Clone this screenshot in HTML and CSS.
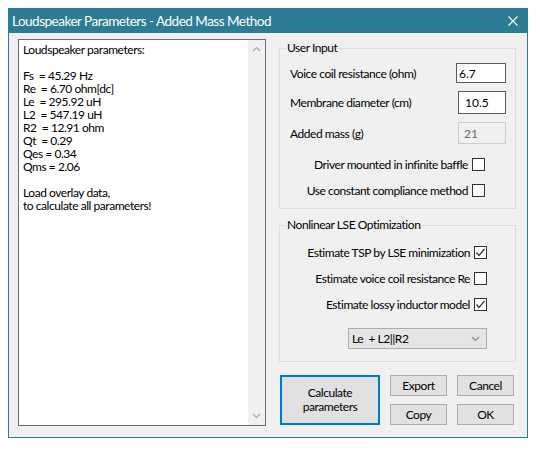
FILE: index.html
```html
<!DOCTYPE html>
<html lang="en">
<head>
    <meta charset="UTF-8">
    <meta name="viewport" content="width=device-width, initial-scale=1.0">
    <title>Loudspeaker Parameters - Added Mass Method</title>
    <link rel="stylesheet" href="styles.css">
</head>
<body>
    <div class="window">
        <div class="titlebar">
            <span class="title">Loudspeaker Parameters - Added Mass Method</span>
            <svg class="close" width="10" height="10" viewBox="0 0 10 10">
                <path d="M0.5 0.5 L9.5 9.5 M9.5 0.5 L0.5 9.5" stroke="#fff" stroke-width="1.1" fill="none"/>
            </svg>
        </div>
        <div class="client">
            <div class="results">
                <pre class="results-text">Loudspeaker parameters:

Fs  = 45.29 Hz
Re  = 6.70 ohm[dc]
Le  = 295.92 uH
L2  = 547.19 uH
R2  = 12.91 ohm
Qt  = 0.29
Qes = 0.34
Qms = 2.06

Load overlay data,
to calculate all parameters!</pre>
                <div class="scrollbar">
                    <svg width="17" height="17" viewBox="0 0 17 17">
                        <path d="M5 10 L8.5 6.5 L12 10" stroke="#a6a6a6" stroke-width="1.2" fill="none"/>
                    </svg>
                    <svg width="17" height="17" viewBox="0 0 17 17">
                        <path d="M5 7 L8.5 10.5 L12 7" stroke="#a6a6a6" stroke-width="1.2" fill="none"/>
                    </svg>
                </div>
            </div>

            <div class="controls">
                <fieldset class="group group-input">
                    <legend>User Input</legend>
                    <div class="field field-re">
                        <label for="re">Voice coil resistance (ohm)</label>
                        <input type="text" id="re" value="6.7">
                    </div>
                    <div class="field field-diam">
                        <label for="diam">Membrane diameter (cm)</label>
                        <input type="text" id="diam" value="10.5">
                    </div>
                    <div class="field field-mass">
                        <label for="mass">Added mass (g)</label>
                        <input type="text" id="mass" value="21" disabled>
                    </div>
                    <div class="check check-first">
                        <span>Driver mounted in infinite baffle</span>
                        <span class="box"></span>
                    </div>
                    <div class="check">
                        <span>Use constant compliance method</span>
                        <span class="box"></span>
                    </div>
                </fieldset>

                <fieldset class="group group-lse">
                    <legend>Nonlinear LSE Optimization</legend>
                    <div class="check check-first">
                        <span>Estimate TSP by LSE minimization</span>
                        <span class="box checked">
                            <svg width="11" height="11" viewBox="0 0 11 11"><path d="M1.5 5.5 L4 8.5 L9.5 2" stroke="#333" stroke-width="1.2" fill="none"/></svg>
                        </span>
                    </div>
                    <div class="check">
                        <span>Estimate voice coil resistance Re</span>
                        <span class="box"></span>
                    </div>
                    <div class="check">
                        <span>Estimate lossy inductor model</span>
                        <span class="box checked">
                            <svg width="11" height="11" viewBox="0 0 11 11"><path d="M1.5 5.5 L4 8.5 L9.5 2" stroke="#333" stroke-width="1.2" fill="none"/></svg>
                        </span>
                    </div>
                    <div class="combo">
                        <span class="combo-value">Le  + L2||R2</span>
                        <svg width="9" height="6" viewBox="0 0 9 6"><path d="M1 1 L4.5 4.5 L8 1" stroke="#8a8a8a" stroke-width="1.1" fill="none"/></svg>
                    </div>
                </fieldset>

                <div class="buttons">
                    <button type="button" class="btn btn-calc">Calculate<br>parameters</button>
                    <button type="button" class="btn">Export</button>
                    <button type="button" class="btn">Cancel</button>
                    <button type="button" class="btn">Copy</button>
                    <button type="button" class="btn">OK</button>
                </div>
            </div>
        </div>
    </div>
</body>
</html>
```

FILE: styles.css
```css
*{
    margin: 0;
    padding: 0;
    box-sizing: border-box;
}
body{
    margin: 8px;
    background-color: #fff;
    font-family: Lato, "Liberation Sans", sans-serif;
    font-size: 12px;
    letter-spacing: -0.45px;
    color: #000;
}

.window{
    width: 520px;
    height: 430px;
    border: 1px solid #2c7c96;
    border-top: none;
    background-color: #f0f0f0;
    display: flex;
    flex-direction: column;
}
.titlebar{
    height: 25px;
    flex-shrink: 0;
    background-color: #2c7c96;
    color: #fff;
    display: flex;
    align-items: center;
    justify-content: space-between;
    padding: 0 9px 0 3px;
}
.title{
    font-size: 13.5px;
    letter-spacing: -0.5px;
}

.client{
    flex: 1;
    display: flex;
    padding: 6px 0 0 9px;
}

/* read-only results box with its scrollbar */
.results{
    width: 248px;
    height: 387px;
    border: 1px solid #6d6d6d;
    background-color: #fff;
    display: flex;
}
.results-text{
    flex: 1;
    padding: 3px 4px;
    font: inherit;
    line-height: 13px;
}
.scrollbar{
    width: 17px;
    background-color: #f0f0f0;
    display: flex;
    flex-direction: column;
    justify-content: space-between;
    padding: 1px 0 1px;
}

.controls{
    width: 237px;
    margin-left: 13px;
    padding-top: 2px;
    display: flex;
    flex-direction: column;
}
.group{
    border: 1px solid #dcdcdc;
    padding: 0 0 11px;
    display: flex;
    flex-direction: column;
}
.group legend{
    margin-left: 6px;
    padding: 0 1px;
    line-height: 14px;
}
.group-lse{
    margin-top: 9px;
    padding-bottom: 12px;
}

.field{
    display: flex;
    align-items: center;
    justify-content: space-between;
    padding: 0 9px 0 10px;
    margin-top: 8px;
}
.field input{
    font: inherit;
    color: #000;
    background-color: #fff;
    border: 1px solid #5a5a5a;
    outline: none;
    width: 48px;
    height: 23px;
    padding-left: 6px;
}
.field-re input{
    width: 50px;
    height: 20px;
    padding-left: 2px;
}
.field-mass input{
    height: 22px;
    padding-left: 5px;
    border-color: #cccccc;
    background-color: #f0f0f0;
    color: #6d6d6d;
}

.check{
    height: 14px;
    margin-top: 12px;
    display: flex;
    align-items: center;
    justify-content: flex-end;
    gap: 4px;
    padding-right: 30px;
}
.check-first{
    margin-top: 13px;
}
.group-lse .check{
    padding-right: 28px;
}
.box{
    width: 13px;
    height: 13px;
    border: 1px solid #333;
    background-color: #fff;
    display: flex;
    align-items: center;
    justify-content: center;
}

.combo{
    width: 139px;
    height: 21px;
    margin: 17px 0 0 68px;
    background-color: #e5e5e5;
    border: 1px solid #adadad;
    display: flex;
    align-items: center;
    justify-content: space-between;
    padding: 0 6px 0 3px;
}
.combo-value{
    white-space: pre;
}

.buttons{
    margin: 13px 0 0 1px;
    display: grid;
    grid-template-columns: 100px 57px 57px;
    grid-template-rows: 21px 21px;
    column-gap: 10px;
    row-gap: 8px;
}
.btn{
    font: inherit;
    letter-spacing: inherit;
    color: #000;
    background-color: #e1e1e1;
    border: 1px solid #adadad;
    line-height: 14px;
}
.btn-calc{
    grid-row: span 2;
    border: 2px solid #0078d7;
}
```
